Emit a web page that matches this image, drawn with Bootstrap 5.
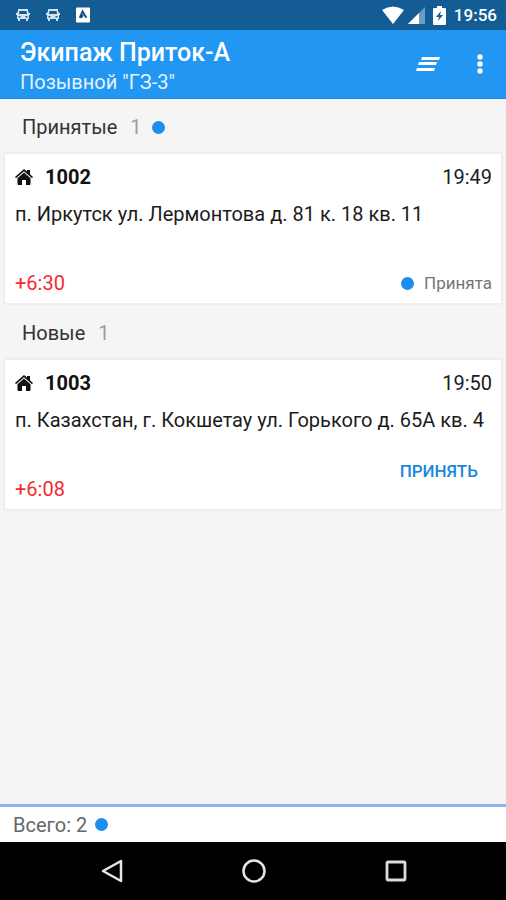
<!DOCTYPE html>
<html lang="ru">
<head>
<meta charset="utf-8">
<meta name="viewport" content="width=device-width, initial-scale=1">
<title>Экипаж Приток-А</title>
<link href="https://cdn.jsdelivr.net/npm/bootstrap@5.3.0/dist/css/bootstrap.min.css" rel="stylesheet">
<style>
body { font-family: Roboto, "Noto Sans", sans-serif; font-size: 20px; line-height: 24px; background: #f5f5f5; color: #212121; }
svg { display: block; flex: none; }
.status-bar { background: #145c94; height: 30px; padding: 0 9px 0 16px; }
.app-clock { font-size: 17px; font-weight: 500; }
.app-bar { background: #2196f3; min-height: 69px; padding: 8px 15px 2px 20px; border-bottom: 1px solid #1787e4; }
.app-title { font-size: 25px; line-height: 30px; font-weight: 500; }
.app-subtitle { line-height: 28px; color: #e3f2fd; }
.icon-btn { background: none; border: 0; padding: 0; color: #fff; }
.app-bar .icon-btn { margin-bottom: 6px; }
.app-actions { gap: 37px; padding-right: 8px; }
.group-head { min-height: 53px; padding: 3px 22px 0; }
.group-title { font-size: 20px; line-height: 24px; font-weight: 400; color: #333; }
.group-count { color: #9e9e9e; margin: 0 10px 0 13px; }
.dot { width: 13px; height: 13px; background: #1c8ef0; flex: none; }
.order { margin: 0 3px; min-height: 153px; border: 2px solid #eee; border-radius: 3px; padding: 11px 9px 8px 10px; color: #1c1c1c; }
.order-number { font-size: 20px; line-height: 24px; font-weight: 700; color: #111; }
.order-address { margin-top: 13px; }
.order-timer { color: #f22b2f; }
.order-state { font-size: 17px; color: #757575; gap: 10px; }
.accept-btn { border: 0; background: none; color: #1b86de; font-size: 17px; font-weight: 500; line-height: 24px; padding: 4px 14px; margin-bottom: 14px; }
.total-bar { border-top: 3px solid #8ab4ec; background: #fff; min-height: 38px; padding: 0 13px; color: #666; gap: 8px; }
.nav-bar { background: #000; height: 58px; padding: 0 40px 0 42px; }
.nav-bar .icon-btn { width: 140px; }
</style>
</head>
<body>
<div class="d-flex flex-column min-vh-100">
  <div class="status-bar d-flex align-items-center text-white">
    <svg width="14" height="12" viewBox="0 0 14 12" fill="#d5e2ee"><path fill-rule="evenodd" d="M2 0h10v2l1 2h1v2h-1v4h-1v2h-2v-2H4v2H2v-2H1V6H0V4h1l1-2zM3.500 2 3 5h8l-.5-3zM2.500 7v1.500h2V7zm7 0v1.500h2V7z"/></svg>
    <svg class="ms-3" width="14" height="12" viewBox="0 0 14 12" fill="#d5e2ee"><path fill-rule="evenodd" d="M2 0h10v2l1 2h1v2h-1v4h-1v2h-2v-2H4v2H2v-2H1V6H0V4h1l1-2zM3.500 2 3 5h8l-.5-3zM2.500 7v1.500h2V7zm7 0v1.500h2V7z"/></svg>
    <svg class="ms-3" width="14" height="16" viewBox="0 0 15 16"><rect width="15" height="16" rx="1" fill="#fff"/><path d="M4 11 7 4l4 7M7.500 8l-2 3" fill="none" stroke="#124a7d" stroke-width="2"/></svg>
    <div class="d-flex align-items-center ms-auto">
      <svg width="22" height="18" viewBox="0 0 22 18"><path d="M0 4Q11-3 22 4L11 18z" fill="#fff"/></svg>
      <svg class="ms-1" width="17" height="17" viewBox="0 0 17 17"><path d="M0 17 17 0v17z" fill="#6c9cc0"/><path d="M0 17 11 6v11z" fill="#fff"/></svg>
      <svg class="ms-2" width="13" height="19" viewBox="0 0 13 19"><path d="M4 0h5v2h3q1 0 1 1v15q0 1-1 1H1q-1 0-1-1V3q0-1 1-1h3z" fill="#fff"/><path d="M8 5 3 11h3l-1 4 5-6H7z" fill="#145c94"/></svg>
      <span class="ms-2 app-clock">19:56</span>
    </div>
  </div>

  <header class="app-bar d-flex align-items-center text-white">
    <div class="flex-grow-1">
      <h1 class="app-title mb-0">Экипаж Приток-А</h1>
      <div class="app-subtitle">Позывной "ГЗ-3"</div>
    </div>
    <div class="app-actions d-flex align-items-center">
      <button class="icon-btn" type="button" aria-label="Сортировка">
        <svg width="24" height="16" viewBox="0 0 24 16" fill="currentColor"><path d="M6 1h18l-1 3H5zM3 6h18l-1 3H2zM1 12h18l-1 3H0z"/></svg>
      </button>
      <button class="icon-btn" type="button" aria-label="Меню">
        <svg width="6" height="20" viewBox="0 0 6 20" fill="currentColor"><circle cx="3" cy="3" r="2.700"/><circle cx="3" cy="10" r="2.700"/><circle cx="3" cy="17" r="2.700"/></svg>
      </button>
    </div>
  </header>

  <main class="flex-grow-1">
    <section>
      <div class="group-head d-flex align-items-center">
        <h2 class="group-title mb-0">Принятые</h2><span class="group-count">1</span><span class="dot rounded-circle"></span>
      </div>
      <article class="order bg-white d-flex flex-column">
        <div class="d-flex align-items-center">
          <svg width="18" height="16" viewBox="0 0 18 16" fill="#111"><path d="M9 0 12 2.600V1h3v4.200L18 8l-1 1.300-8-7-8 7L0 8z"/><path d="m9 3.500 6.500 5.700V15q0 1-1 1H11v-5H7v5H3.500q-1 0-1-1V9.200z"/></svg>
          <h3 class="order-number mb-0 ms-2 ps-1">1002</h3>
          <time class="ms-auto">19:49</time>
        </div>
        <div class="order-address">п. Иркутск ул. Лермонтова д. 81 к. 18 кв. 11</div>
        <div class="d-flex align-items-end mt-auto">
          <span class="order-timer">+6:30</span>
          <span class="order-state ms-auto d-flex align-items-center"><span class="dot rounded-circle"></span>Принята</span>
        </div>
      </article>
    </section>

    <section>
      <div class="group-head d-flex align-items-center">
        <h2 class="group-title mb-0">Новые</h2><span class="group-count">1</span>
      </div>
      <article class="order bg-white d-flex flex-column">
        <div class="d-flex align-items-center">
          <svg width="18" height="16" viewBox="0 0 18 16" fill="#111"><path d="M9 0 12 2.600V1h3v4.200L18 8l-1 1.300-8-7-8 7L0 8z"/><path d="m9 3.500 6.500 5.700V15q0 1-1 1H11v-5H7v5H3.500q-1 0-1-1V9.200z"/></svg>
          <h3 class="order-number mb-0 ms-2 ps-1">1003</h3>
          <time class="ms-auto">19:50</time>
        </div>
        <div class="order-address">п. Казахстан, г. Кокшетау ул. Горького д. 65А кв. 4</div>
        <div class="d-flex align-items-end mt-auto">
          <span class="order-timer">+6:08</span>
          <button class="accept-btn ms-auto" type="button">ПРИНЯТЬ</button>
        </div>
      </article>
    </section>
  </main>

  <footer>
    <div class="total-bar d-flex align-items-center">Всего: 2<span class="dot rounded-circle"></span></div>
    <nav class="nav-bar d-flex align-items-center justify-content-between">
      <button class="icon-btn d-flex justify-content-center" type="button" aria-label="Назад"><svg width="22" height="24" viewBox="0 0 22 24"><path d="M20 2v20L2 12z" fill="none" stroke="#e6e6e6" stroke-width="2.500" stroke-linejoin="round"/></svg></button>
      <button class="icon-btn d-flex justify-content-center" type="button" aria-label="Домой"><svg width="24" height="24" viewBox="0 0 24 24"><circle cx="12" cy="12" r="10.500" fill="none" stroke="#e6e6e6" stroke-width="2.500"/></svg></button>
      <button class="icon-btn d-flex justify-content-center" type="button" aria-label="Обзор"><svg width="22" height="22" viewBox="0 0 22 22"><rect x="2" y="2" width="18" height="18" rx="1" fill="none" stroke="#dcdcdc" stroke-width="2.800"/></svg></button>
    </nav>
  </footer>
</div>
<script src="https://cdn.jsdelivr.net/npm/bootstrap@5.3.0/dist/js/bootstrap.bundle.min.js"></script>
</body>
</html>
